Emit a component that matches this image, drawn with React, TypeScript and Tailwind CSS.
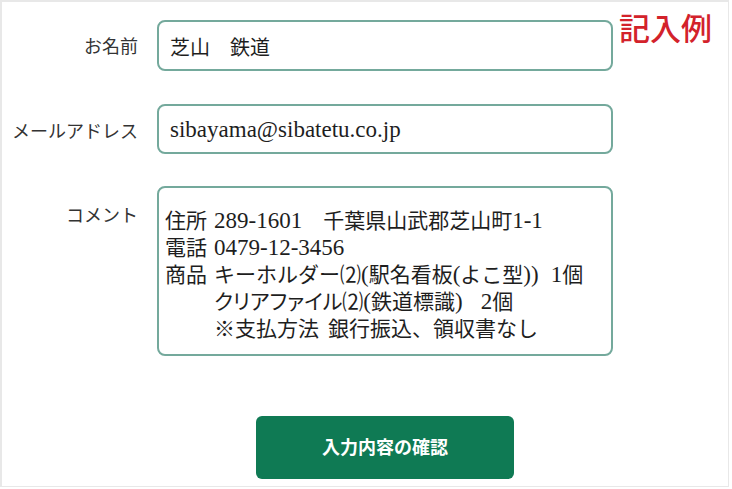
function L({ children }: { children: React.ReactNode }) {
  return <span className="font-['Liberation_Serif',serif] text-[23px] leading-none">{children}</span>;
}

function Gap({ w }: { w: string }) {
  return <span className={`inline-block ${w}`} />;
}

export default function App() {
  return (
    <div className="w-[732px] h-[489px] bg-white">
      <div className="w-[729px] h-[487px] border-t-2 border-l-2 border-r border-b border-[#e8e8e8] pt-[18px] font-['Noto_Sans_CJK_JP',sans-serif] text-[#1e1e1e]">
        {/* お名前 */}
        <div className="flex items-start">
          <div className="w-[136px] h-[51px] flex items-center justify-end text-[18px] text-[#333]">お名前</div>
          <div className="ml-[19px] w-[456px] h-[51px] border-2 border-[#74a99c] rounded-[8px] flex items-center pl-[11px] pt-[3px] text-[20px]">
            芝山　鉄道
          </div>
          <div className="ml-[6px] -mt-[9px] text-[31px] font-medium leading-none text-[#d3222b]">記入例</div>
        </div>

        {/* メールアドレス */}
        <div className="flex items-start mt-[33px]">
          <div className="w-[136px] h-[50px] flex items-center justify-end text-[18px] text-[#333] pt-[2px]">メールアドレス</div>
          <div className="ml-[19px] w-[456px] h-[50px] border-2 border-[#74a99c] rounded-[8px] flex items-center pl-[11px] pt-[2px]">
            <span className="font-['Liberation_Serif',serif] text-[23px]">sibayama@sibatetu.co.jp</span>
          </div>
        </div>

        {/* コメント */}
        <div className="flex items-start mt-[32px]">
          <div className="w-[136px] pt-[16px] leading-[24px] text-right text-[18px] text-[#333]">コメント</div>
          <div className="ml-[19px] w-[456px] h-[170px] border-2 border-[#74a99c] rounded-[8px] pl-[6px] pt-[18px] text-[21px] leading-[27px]">
            <div className="grid grid-cols-[41px_1fr] gap-x-[8px] whitespace-nowrap">
              <div>住所</div>
              <div>
                <L>289-1601</L>
                <Gap w="w-[21px]" />
                千葉県山武郡芝山町<L>1-1</L>
              </div>
              <div>電話</div>
              <div>
                <L>0479-12-3456</L>
              </div>
              <div>商品</div>
              <div>
                キーホルダー⑵<L>(</L>駅名看板<L>(</L>よこ型<L>))</L>
                <Gap w="w-[12px]" />
                <L>1</L>個
              </div>
              <div />
              <div>
                <span className="[font-feature-settings:'palt']">クリアファイル</span>⑵<L>(</L>鉄道標識<L>)</L>
                <Gap w="w-[18px]" />
                <L>2</L>個
              </div>
              <div />
              <div>
                ※支払方法
                <Gap w="w-[9px]" />
                銀行振込、領収書なし
              </div>
            </div>
          </div>
        </div>

        {/* ボタン */}
        <div className="flex mt-[60px]">
          <div className="w-[155px]" />
          <div className="w-[456px] flex justify-center">
            <button className="w-[258px] h-[63px] rounded-[6px] bg-[#0f7a54] text-white text-[18px] font-bold pb-[3px]">
              入力内容の確認
            </button>
          </div>
        </div>
      </div>
    </div>
  );
}
